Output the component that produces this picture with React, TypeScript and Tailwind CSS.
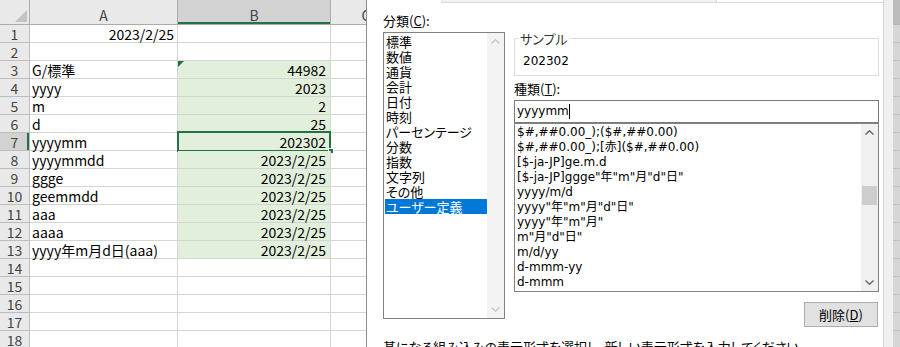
import React from 'react';

type Row = { a: string; b: string; aRight?: boolean; green?: boolean };

const sheetRows: Row[] = [
  { a: '2023/2/25', b: '', aRight: true },
  { a: '', b: '' },
  { a: 'G/標準', b: '44982', green: true },
  { a: 'yyyy', b: '2023', green: true },
  { a: 'm', b: '2', green: true },
  { a: 'd', b: '25', green: true },
  { a: 'yyyymm', b: '202302', green: true },
  { a: 'yyyymmdd', b: '2023/2/25', green: true },
  { a: 'ggge', b: '2023/2/25', green: true },
  { a: 'geemmdd', b: '2023/2/25', green: true },
  { a: 'aaa', b: '2023/2/25', green: true },
  { a: 'aaaa', b: '2023/2/25', green: true },
  { a: 'yyyy年m月d日(aaa)', b: '2023/2/25', green: true },
  { a: '', b: '' },
  { a: '', b: '' },
  { a: '', b: '' },
  { a: '', b: '' },
  { a: '', b: '' },
];

const categories = [
  '標準',
  '数値',
  '通貨',
  '会計',
  '日付',
  '時刻',
  'パーセンテージ',
  '分数',
  '指数',
  '文字列',
  'その他',
  'ユーザー定義',
];

const formats = [
  '$#,##0.00_);($#,##0.00)',
  '$#,##0.00_);[赤]($#,##0.00)',
  '[$-ja-JP]ge.m.d',
  '[$-ja-JP]ggge"年"m"月"d"日"',
  'yyyy/m/d',
  'yyyy"年"m"月"d"日"',
  'yyyy"年"m"月"',
  'm"月"d"日"',
  'm/d/yy',
  'd-mmm-yy',
  'd-mmm',
];

function Chev({ up, color }: { up?: boolean; color: string }) {
  return (
    <svg width="9" height="5" viewBox="0 0 9 5">
      <polyline
        points={up ? '0.5,4.5 4.5,0.7 8.5,4.5' : '0.5,0.5 4.5,4.3 8.5,0.5'}
        fill="none"
        stroke={color}
        strokeWidth="1.3"
      />
    </svg>
  );
}

function Sheet() {
  return (
    <div className="w-[366px] shrink-0 overflow-hidden bg-white font-['Noto_Sans_CJK_JP',sans-serif] text-[14px] text-black">
      <div className="flex h-[25px] border-b border-[#ababab] bg-[#e9e9e9] text-[#444]">
        <div className="relative w-[30px] shrink-0 border-r border-[#ababab]">
          <svg className="absolute left-[15px] top-[10px]" width="12" height="12" viewBox="0 0 12 12">
            <polygon points="12,0 12,12 0,12" fill="#c2c2c2" />
          </svg>
        </div>
        <div className="w-[148px] shrink-0 border-r border-[#ababab] pt-[6px] text-center leading-[18px]">A</div>
        <div className="w-[153px] shrink-0 border-r border-[#ababab] bg-[#d2d2d2] pt-[6px] text-center leading-[18px] shadow-[inset_0_-2px_0_#217346]">
          B
        </div>
        <div className="w-[70px] shrink-0 pt-[6px] text-center leading-[18px]">C</div>
      </div>
      {sheetRows.map((r, i) => {
        const n = i + 1;
        const active = n === 7;
        return (
          <div key={n} className="flex h-[18px] leading-[18px]">
            <div
              className={
                active
                  ? 'w-[30px] shrink-0 border-b border-r border-[#bdbdbd] bg-[#d2d2d2] text-center text-[#444] shadow-[inset_-2px_0_0_#217346]'
                  : 'w-[30px] shrink-0 border-b border-r border-[#bdbdbd] bg-[#e9e9e9] text-center text-[#444]'
              }
            >
              {n}
            </div>
            <div
              className={
                r.aRight
                  ? 'w-[148px] shrink-0 whitespace-nowrap border-b border-r border-[#d4d4d4] pr-[3px] text-right'
                  : 'w-[148px] shrink-0 whitespace-nowrap border-b border-r border-[#d4d4d4] pl-[2px]'
              }
            >
              {r.a}
            </div>
            <div
              className={
                r.green
                  ? 'relative w-[153px] shrink-0 border-b border-r border-[#d4d4d4] bg-[#e2efda] pr-[4px] text-right'
                  : 'relative w-[153px] shrink-0 border-b border-r border-[#d4d4d4] pr-[4px] text-right'
              }
            >
              {r.b}
              {n === 3 && (
                <svg className="absolute left-0 top-0" width="6" height="6" viewBox="0 0 6 6">
                  <polygon points="0,0 6,0 0,6" fill="#217346" />
                </svg>
              )}
              {active && (
                <>
                  <div className="absolute -bottom-[2px] -left-[1px] -right-[1px] -top-[2px] border-2 border-[#217346]" />
                  <div className="absolute -bottom-[4px] -right-[4px] h-[6px] w-[6px] border border-white bg-[#217346]" />
                </>
              )}
            </div>
            <div className="w-[70px] shrink-0 border-b border-[#d4d4d4]" />
          </div>
        );
      })}
    </div>
  );
}

function FormatDialog() {
  return (
    <div className="flex w-[518px] shrink-0 flex-col border-x border-l-[#8c8c8c] border-r-[#d4d4d4] bg-white font-['Noto_Sans_CJK_JP',sans-serif] text-[13px] text-black [font-feature-settings:'palt']">
      <div className="flex h-[3px] shrink-0">
        <div className="w-[74px]" />
        <div className="w-[276px] border-b border-r border-[#d9d9d9] bg-[#eef1f5]" />
        <div className="flex-1 border-b border-[#d9d9d9]" />
      </div>
      <div className="flex gap-[9px] pl-[16px]">
        <div className="w-[122px] shrink-0">
          <div className="h-[29px] pt-[10px] leading-[15px]">
            分類(<span className="underline">C</span>):
          </div>
          <div className="flex h-[287px] border border-[#828282]">
            <div className="flex-1 whitespace-nowrap pl-px pt-px leading-[15px]">
              {categories.map((c) => (
                <div key={c} className={c === 'ユーザー定義' ? 'bg-[#0078d7] pl-px text-white' : 'pl-px'}>
                  {c}
                </div>
              ))}
            </div>
            <div className="flex w-[17px] flex-col justify-between bg-[#f3f3f3]">
              <div className="flex h-[17px] items-center justify-center">
                <Chev up color="#c6c6c6" />
              </div>
              <div className="flex h-[17px] items-center justify-center">
                <Chev color="#c6c6c6" />
              </div>
            </div>
          </div>
        </div>

        <div className="flex w-[365px] shrink-0 flex-col">
          <div className="relative mt-[35px] h-[38px] border border-[#dcdcdc]">
            <span className="absolute -top-[8px] left-[4px] bg-white px-px leading-[15px] text-[#333]">サンプル</span>
            <div className="pl-[8px] pt-[15px] font-['DejaVu_Sans','Noto_Sans_CJK_JP',sans-serif] text-[12px] leading-[15px]">
              202302
            </div>
          </div>
          <div className="mt-[5px] leading-[15px]">
            種類(<span className="underline">T</span>):
          </div>
          <div className="mt-[4px] flex h-[23px] items-center border border-[#7a7a7a] pl-[2px] font-['DejaVu_Sans','Noto_Sans_CJK_JP',sans-serif] text-[12px]">
            <span className="leading-[15px]">yyyymm</span>
            <span className="inline-block h-[15px] w-px bg-black" />
          </div>
          <div className="flex h-[169px] border border-[#828282]">
            <div className="flex-1 overflow-hidden whitespace-nowrap pl-[2px] pt-px font-['DejaVu_Sans','Noto_Sans_CJK_JP',sans-serif] text-[12px] leading-[15px]">
              {formats.map((f) => (
                <div key={f}>{f}</div>
              ))}
            </div>
            <div className="flex w-[17px] flex-col bg-[#f0f0f0]">
              <div className="flex h-[17px] items-center justify-center">
                <Chev up color="#606060" />
              </div>
              <div className="h-[45px]" />
              <div className="mx-px h-[19px] bg-[#cdcdcd]" />
              <div className="flex-1" />
              <div className="flex h-[17px] items-center justify-center">
                <Chev color="#606060" />
              </div>
            </div>
          </div>
          <div className="mr-px mt-[10px] flex h-[25px] w-[74px] items-center justify-center self-end border border-[#adadad] bg-[#e1e1e1] leading-none">
            削除(<span className="underline">D</span>)
          </div>
        </div>
      </div>
      <div className="mt-[12px] whitespace-nowrap pl-[16px] leading-[15px]">
        基になる組み込みの表示形式を選択し、新しい表示形式を入力してください。
      </div>
    </div>
  );
}

export default function App() {
  return (
    <div className="flex h-[347px] w-[900px] overflow-hidden bg-white">
      <Sheet />
      <FormatDialog />
      <div className="w-[9px] shrink-0 bg-[#f0f0f0]" />
      <div className="flex w-[7px] shrink-0 flex-col bg-[#d6d6d6]">
        <div className="h-[25px] shrink-0 border-b border-[#b5b5b5] bg-[#bcbcbc]" />
        {sheetRows.map((_, i) => (
          <div key={i} className="h-[18px] shrink-0 border-b border-[#c2c2c2]" />
        ))}
      </div>
    </div>
  );
}
